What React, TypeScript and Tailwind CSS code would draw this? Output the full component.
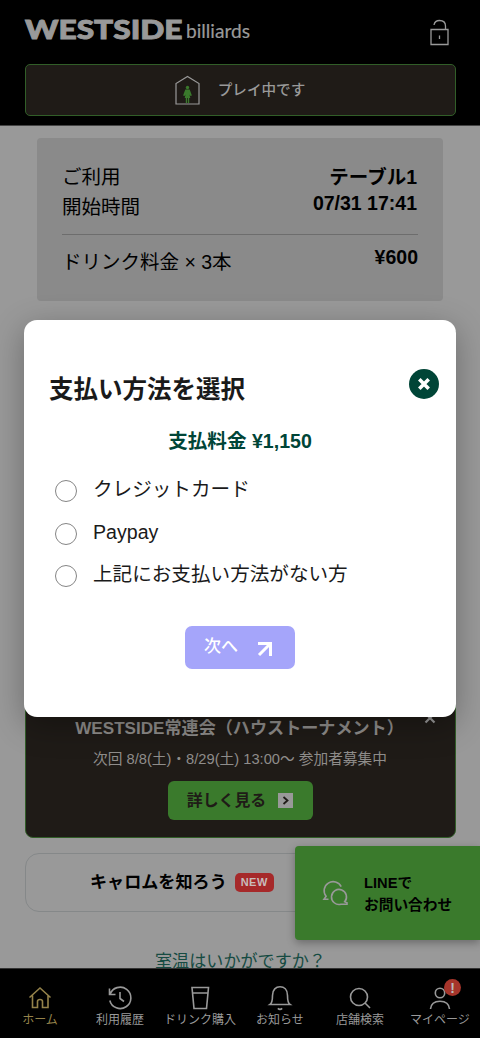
import type { ReactNode } from 'react'

const navItems: { label: string; icon: ReactNode; active?: boolean; badge?: boolean }[] = [
  {
    label: 'ホーム',
    active: true,
    icon: <path d="M1.500 11.500 12 2l10.500 9.500M4.500 9.500V21.500H9.500V15.500Q9.500 13.500 12 13.500T14.500 15.500V21.500H20V9.500" />,
  },
  {
    label: '利用履歴',
    icon: <path d="M1.500 2.500V8.500H7.500M2 8.500A10.700 10.700 0 1 1 1.800 14.500M12 6V12.500L16 15.500" />,
  },
  {
    label: 'ドリンク購入',
    icon: <path d="M4 1.500H20.500L18.500 22.500H6ZM4.500 7H20" />,
  },
  {
    label: 'お知らせ',
    icon: <path d="M2 18.500C4.200 17 4.500 14 4.500 9.500C4.500 3.500 8 .8 12 .8S19.500 3.500 19.500 9.500C19.500 14 19.800 17 22 18.500ZM9.800 22.300Q12 24.300 14.200 22.300" />,
  },
  {
    label: '店舗検索',
    icon: (
      <>
        <circle cx="11" cy="11" r="8.500" />
        <path d="m17 17 5 5" />
      </>
    ),
  },
  {
    label: 'マイページ',
    badge: true,
    icon: (
      <>
        <circle cx="12" cy="7" r="4.700" />
        <path d="M2.500 23C3 17.500 7 15.200 12 15.200S21 17.500 21.500 23" />
      </>
    ),
  },
]

const methods = ['クレジットカード', 'Paypay', '上記にお支払い方法がない方']

function Header() {
  return (
    <header className="h-[126px] shrink-0 border-b border-[#444] bg-black pl-[25px] pr-[24px] pt-4">
      <div className="flex h-8 items-center justify-between pr-[7px]">
        <svg width="228" height="32" viewBox="0 0 228 32" fill="#999" className="overflow-visible font-[Lato]">
          <text x="0" y="22.700" fontSize="26.200" fontWeight="900" stroke="#999" strokeWidth=".9" textLength="157.500" lengthAdjust="spacingAndGlyphs">
            WESTSIDE
          </text>
          <text x="161" y="22" fontSize="19" stroke="#999" strokeWidth=".2" textLength="64" lengthAdjust="spacingAndGlyphs">
            billiards
          </text>
        </svg>
        <svg width="19" height="27" viewBox="0 0 19 27" fill="none" stroke="#999" strokeWidth="1.300">
          <path d="M1 10.500H18V25.500H1ZM4 6C4.500 3 6.500 1.500 9.500 1.500C13 1.500 15.500 3.500 15.500 7V10.500M9.500 16.500v3.500" />
        </svg>
      </div>
      <div className="mt-4 flex h-[52px] items-center justify-center gap-[18px] rounded-[5px] border border-[#315e28] bg-[#1f1b17]">
        <svg width="25" height="30" viewBox="0 0 25 30">
          <path d="M1 29V8.500L12.500 1.500L24 8.500V29Z" fill="none" stroke="#999" strokeWidth="1.200" />
          <circle cx="12.500" cy="12.500" r="1.700" fill="#3a7a2c" />
          <path d="M10.300 14.500h4.400l2.200 6-1.400.5-1-1.500.8 3.500h-1.100V28h-1.300v-5h-.8v5h-1.300v-5H9.700l.8-3.500-1 1.500-1.400-.5Z" fill="#3a7a2c" />
        </svg>
        <span className="mr-px text-[14.600px] font-medium leading-5 text-[#999]">プレイ中です</span>
      </div>
    </header>
  )
}

function Summary() {
  return (
    <section className="ml-[12px] mr-[13px] h-[163px] shrink-0 rounded-[4px] bg-[#8a8a8a] px-[25px] pt-[24px] text-[19.500px] text-black">
      <div className="flex h-[73px] justify-between border-b border-[#6d6d6d]">
        <p className="leading-[30px]">
          ご利用
          <br />
          開始時間
        </p>
        <p className="pr-px pt-[2px] text-right font-bold leading-[26px]">
          テーブル1
          <br />
          07/31 17:41
        </p>
      </div>
      <div className="flex justify-between pt-[8px]">
        <span className="pt-[3px] leading-[32px]">ドリンク料金 × 3本</span>
        <span className="font-bold leading-[29px]">¥600</span>
      </div>
    </section>
  )
}

function EventCard() {
  return (
    <section className="relative mt-[59px] flex h-[178px] shrink-0 flex-col items-center rounded-[8px] border border-[#315e28] bg-[#1f1b17] pt-[56px] text-[#8f8d8b]">
      <svg width="12" height="12" viewBox="0 0 12 12" stroke="#999" strokeWidth="2.200" className="absolute right-[19px] top-[51px]">
        <path d="m1.500 1.500 9 9m0-9-9 9" />
      </svg>
      <h3 className="mr-[2px] whitespace-nowrap text-[17.100px] font-bold leading-[24px]">WESTSIDE常連会（ハウストーナメント）</h3>
      <p className="mr-px mt-[8px] text-[14.700px] leading-[20px]">次回 8/8(土)・8/29(土) 13:00〜 参加者募集中</p>
      <button className="mr-px mt-[12px] flex h-[39px] w-[145px] items-center justify-center gap-[12px] rounded-[6px] bg-[#3a7a2c] text-[15.900px] font-bold text-[#1f1b17]">
        詳しく見る
        <span className="flex size-[15px] items-center justify-center bg-[#999]">
          <svg width="7" height="9" viewBox="0 0 7 9" fill="none" stroke="#1f1b17" strokeWidth="1.800">
            <path d="m1.500 1 4 3.500-4 3.500" />
          </svg>
        </span>
      </button>
    </section>
  )
}

function LineContact() {
  return (
    <a className="absolute right-0 top-[846px] flex h-[94px] w-[185px] items-center rounded-l-[4px] bg-[#3a7a2c] pl-[27px] text-black shadow-[0_3px_9px_rgba(0,0,0,0.3)]">
      <svg width="27" height="27" viewBox="0 0 27 27" fill="none" stroke="#999" strokeWidth="1.600">
        <path d="M19.200 6.700A9 9 0 1 0 4.100 16.300L2 19.300H6.500" />
        <path d="M22.700 21.800A7.500 7.500 0 1 0 18.900 24.200H25V22.800Z" />
      </svg>
      <span className="ml-[15px] pt-px text-[14.700px] font-bold leading-[22px]">
        LINEで
        <br />
        お問い合わせ
      </span>
    </a>
  )
}

function BottomNav() {
  return (
    <nav className="flex h-[70px] shrink-0 border-t border-[#333] bg-black">
      {navItems.map((item) => (
        <div key={item.label} className={`relative flex w-20 flex-col items-center pt-[17px] ${item.active ? 'text-[#94824a]' : 'text-[#999]'}`}>
          <svg width="24" height="24" viewBox="0 0 24 24" fill="none" stroke="currentColor" strokeWidth="1.600" className="overflow-visible">
            {item.icon}
          </svg>
          <span className="mt-px whitespace-nowrap text-[12px] leading-[18px]">{item.label}</span>
          {item.badge && (
            <span className="absolute left-[44px] top-[10px] flex size-[17px] items-center justify-center rounded-full bg-[#a6352b] text-[14px] font-bold leading-none text-[#bbb]">
              !
            </span>
          )}
        </div>
      ))}
    </nav>
  )
}

function PaymentDialog() {
  return (
    <div
      role="dialog"
      className="absolute left-[24px] top-[320px] flex h-[397px] w-[432px] flex-col rounded-[13px] bg-white px-[25px] pt-[49px] text-[19.500px] text-[#1a1a1a] shadow-[0_8px_32px_rgba(0,0,0,0.3)]"
    >
      <div className="flex h-[36px] items-start justify-between">
        <h2 className="pt-[3px] text-[24.500px] font-bold leading-[36px]">支払い方法を選択</h2>
        <button aria-label="閉じる" className="-mr-[8px] flex size-[30px] items-center justify-center rounded-full bg-[#004537]">
          <svg width="12" height="12" viewBox="0 0 12 12" stroke="white" strokeWidth="3.600">
            <path d="m1.300 1.300 9.400 9.400m0-9.400-9.400 9.400" />
          </svg>
        </button>
      </div>
      <p className="mt-[21px] text-center text-[19.600px] font-bold leading-[30px] text-[#004537]">支払料金 ¥1,150</p>
      <div className="mt-[13px] flex flex-col pl-[6px]">
        {methods.map((method) => (
          <label key={method} className="flex h-[42.500px] items-center gap-[16px]">
            <input type="radio" name="method" className="mt-[2px] size-[22px] shrink-0 appearance-none rounded-full border border-[#858585]" />
            <span className="-mt-[2px] text-[19.600px] leading-[30px]">{method}</span>
          </label>
        ))}
      </div>
      <button className="mx-auto mt-[29px] flex h-[43px] w-[110px] items-center rounded-[7px] bg-[#a5a5fa] pl-[19px] text-[17px] font-medium text-white">
        次へ
        <svg width="16" height="16" viewBox="0 0 16 16" fill="none" stroke="white" strokeWidth="3" className="ml-[19px] mt-[4px]">
          <path d="M1 2.500h12.500V15M13 3 2 14" />
        </svg>
      </button>
    </div>
  )
}

export default function App() {
  return (
    <div
      lang="ja"
      className="relative flex h-[1038px] w-[480px] flex-col overflow-hidden bg-[#999] font-['Liberation_Sans','Noto_Sans_CJK_JP',sans-serif]"
    >
      <Header />
      <main className="flex min-h-0 flex-1 flex-col overflow-hidden pl-[25px] pr-[24px] pt-[12px]">
        <Summary />
        <div className="mt-[25px] h-[203px] shrink-0 rounded-[8px] border border-[#31523c]" />
        <div className="mt-[31px] h-[41px] shrink-0 rounded-[4px] bg-[#55557f]" />
        <EventCard />
        <div className="mt-[15px] flex h-[59px] shrink-0 items-center rounded-[14px] border border-[#858889] pl-[64px] text-[17.100px] font-bold text-black">
          キャロムを知ろう
          <span className="ml-[8px] flex h-[19px] w-[39px] items-center justify-center rounded-[5px] bg-[#a6292a] text-[11px] leading-none tracking-[0.500px] text-[#c8bcbc]">
            NEW
          </span>
        </div>
        <p className="mt-[36px] shrink-0 text-center text-[17.100px] leading-[28px] text-[#164b42]">室温はいかがですか？</p>
      </main>
      <BottomNav />
      <LineContact />
      <PaymentDialog />
    </div>
  )
}
